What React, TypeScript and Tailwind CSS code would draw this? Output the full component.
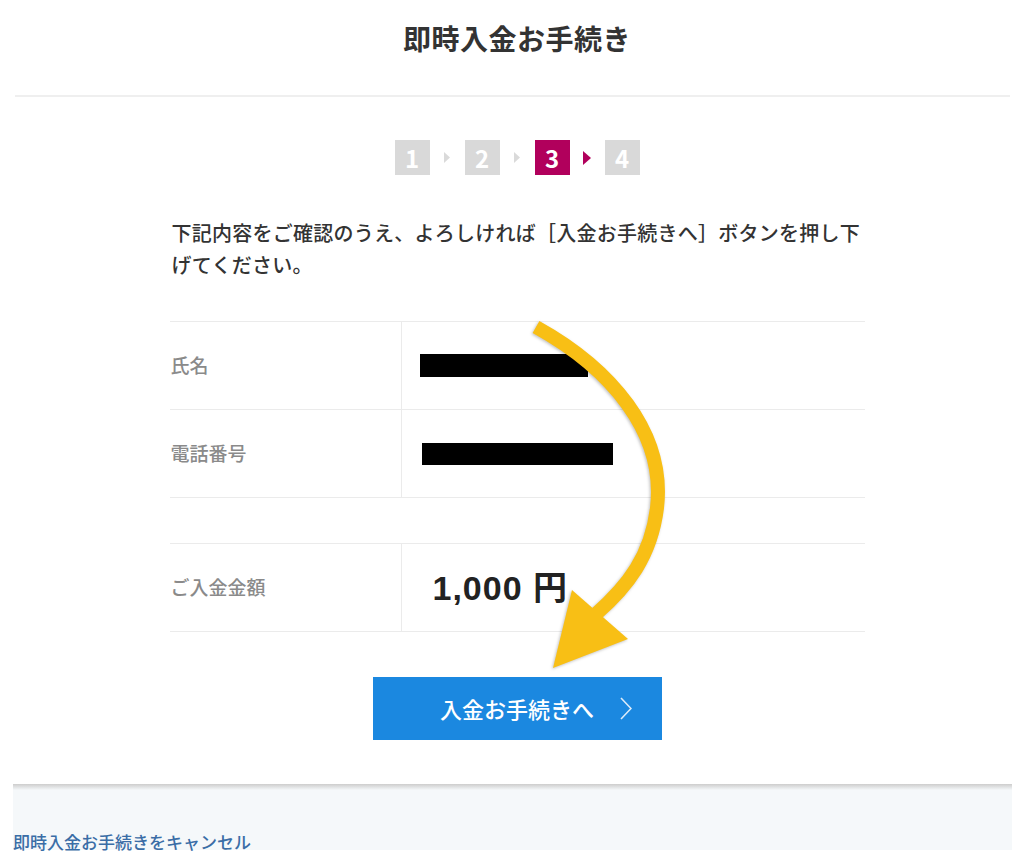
import type { ReactNode } from "react";

const JP = "font-['Noto_Sans_CJK_JP','Noto_Sans',sans-serif]";

function Step({ n, active }: { n: number; active?: boolean }) {
  return (
    <div
      className={
        active
          ? "flex h-[35px] w-[35px] items-center justify-center bg-[#b1005c] text-[24px] font-bold leading-none text-white"
          : "flex h-[35px] w-[35px] items-center justify-center bg-[#d9d9d9] text-[24px] font-bold leading-none text-white"
      }
    >
      {n}
    </div>
  );
}

function Caret({ active }: { active?: boolean }) {
  return (
    <div className="flex w-[35px] items-center justify-center">
      {active ? (
        <svg width="8" height="14" viewBox="0 0 8 14">
          <polygon points="0,0 8,7 0,14" fill="#b1005c" />
        </svg>
      ) : (
        <svg width="6" height="11" viewBox="0 0 6 11">
          <polygon points="0,0 6,5.5 0,11" fill="#dadada" />
        </svg>
      )}
    </div>
  );
}

function Row({ label, children }: { label: string; children?: ReactNode }) {
  return (
    <div className="grid h-[88px] grid-cols-[232px_1fr] border-b border-[#ebebeb]">
      <div className="flex items-center border-r border-[#ebebeb] pl-[1px] text-[19px] font-medium text-[#8a8a8a]">
        {label}
      </div>
      <div className="flex items-center">{children}</div>
    </div>
  );
}

export default function App() {
  return (
    <div className={`relative h-[860px] w-[1024px] overflow-hidden bg-white text-[#333] ${JP}`}>
      {/* header */}
      <header className="h-[95px] pl-[10px] pt-[20px]">
        <h1 className="text-center text-[28px] font-bold leading-[36px] tracking-[0.5px] text-[#333]">即時入金お手続き</h1>
      </header>
      <div className="ml-[15px] mr-[14px] h-[2px] bg-[#efefef]" />

      <main className="pl-[10px]">
        <div className="mx-auto w-[695px]">
          <div className="mt-[43px] flex items-center justify-center">
            <Step n={1} />
            <Caret />
            <Step n={2} />
            <Caret />
            <Step n={3} active />
            <Caret active />
            <Step n={4} />
          </div>

          <p className="mt-[42px] pl-[2px] text-[20px] font-medium leading-[32px] tracking-[0.25px] text-[#333]">
            下記内容をご確認のうえ、よろしければ［入金お手続きへ］ボタンを押し下げてください。
          </p>

          <div className="mt-[40px] border-t border-[#ebebeb]">
            <Row label="氏名">
              <div className="ml-[18px] h-[23px] w-[168px] bg-black" />
            </Row>
            <Row label="電話番号">
              <div className="ml-[20px] h-[22px] w-[191px] bg-black" />
            </Row>
          </div>

          <div className="mt-[45px] border-t border-[#ebebeb]">
            <Row label="ご入金金額">
              <span className="pl-[31px] font-['Liberation_Sans','Noto_Sans_CJK_JP',sans-serif] text-[34px] font-bold leading-none tracking-[1px] text-[#222]">
                1,000 円
              </span>
            </Row>
          </div>

          <button className="relative mx-auto mt-[45px] flex h-[63px] w-[289px] items-center justify-center bg-[#1b88e0] text-[22px] font-medium text-white">
            入金お手続きへ
            <svg
              className="absolute right-[30px] top-[20px]"
              width="12"
              height="23"
              viewBox="0 0 12 23"
              fill="none"
              stroke="#dcebf9"
              strokeWidth="1.6"
            >
              <polyline points="1,1 11,11.5 1,22" />
            </svg>
          </button>
        </div>
      </main>

      {/* footer */}
      <footer className="ml-[13px] mr-[12px] mt-[44px] bg-[#f5f8fa]">
        <div className="h-[6px] bg-gradient-to-b from-[#cdcdcd] to-[#f5f8fa]" />
        <div className="h-[60px] pt-[42px]">
          <a href="#" className="block text-[17px] font-medium leading-[20px] text-[#3a6da6]">
            即時入金お手続きをキャンセル
          </a>
        </div>
      </footer>

      {/* highlight arrow */}
      <svg className="pointer-events-none absolute left-0 top-0" width="1024" height="860" viewBox="0 0 1024 860">
        <g style={{ filter: "drop-shadow(-1px 1px 1.5px rgba(0,0,0,0.25))" }}>
          <path
            d="M 536 327 C 610 368, 666 432, 657 508 C 651 556, 628 586, 596 614"
            fill="none"
            stroke="#f8bf15"
            strokeWidth="14"
          />
          <polygon points="572,590 628,639 553,668" fill="#f8bf15" />
        </g>
      </svg>
    </div>
  );
}
